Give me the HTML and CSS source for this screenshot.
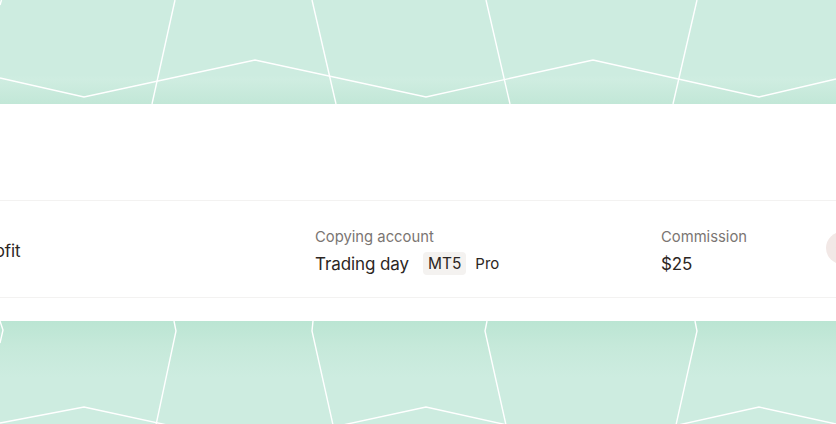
FILE: index.html
```html
<!DOCTYPE html>
<html>
<head>
<meta charset="utf-8">
<link rel="stylesheet" href="styles.css">
</head>
<body>
<div class="page">
  <div class="band band-top">
    <svg class="pattern" width="836" height="104" viewBox="0 0 836 104">
      <g fill="none" stroke="#ffffff" stroke-width="1.4" stroke-linejoin="miter">
        <polyline points="1.5,0 0,5"/>
        <polyline points="175,0 152,104"/>
        <polyline points="312,0 336,104"/>
        <polyline points="486,0 510,104"/>
        <polyline points="697,0 673,104"/>
        <polyline points="0,78 84,97 255,60 426,97 593,60 759,97 836,79"/>
      </g>
    </svg>
  </div>
  <div class="panel">
    <div class="row">
      <div class="cell cell-profit">
        <span class="value">Profit</span>
      </div>
      <div class="cell">
        <span class="label">Copying account</span>
        <div class="value-line">
          <span class="value">Trading day</span>
          <span class="badge">MT5</span>
          <span class="tag">Pro</span>
        </div>
      </div>
      <div class="cell">
        <span class="label">Commission</span>
        <span class="value">$25</span>
      </div>
      <div class="cell cell-avatar">
        <span class="avatar">C</span>
      </div>
    </div>
  </div>
  <div class="band band-bottom">
    <svg class="pattern" width="836" height="103" viewBox="0 0 836 103">
      <g fill="none" stroke="#ffffff" stroke-width="1.4" stroke-linejoin="miter">
        <polyline points="0,0 3,9 0,22"/>
        <polyline points="174,0 176,10 156,104"/>
        <polyline points="313,0 312,10 333,104"/>
        <polyline points="487,0 485,10 506,104"/>
        <polyline points="695,0 697,10 676,104"/>
        <polyline points="0,102 84,86 255,123 426,86 593,123 759,86 836,103"/>
      </g>
    </svg>
  </div>
</div>
</body>
</html>
```

FILE: styles.css
```css
* {
  box-sizing: border-box;
}

html, body {
  margin: 0;
  padding: 0;
}

body {
  width: 836px;
  height: 424px;
  overflow: hidden;
  background: #cdece0;
  font-family: Inter, "Noto Sans", sans-serif;
  color: #2c2623;
}

.page {
  display: flex;
  flex-direction: column;
  width: 836px;
}

.band {
  display: block;
  overflow: hidden;
}

.band-top {
  height: 104px;
  background: linear-gradient(to bottom, #cdece0 0%, #cdece0 72%, #cfede1 76%, #c2e7d7 100%);
}

.band-bottom {
  height: 103px;
  background: linear-gradient(to bottom, #bbe5d3 0%, #c6e9da 25%, #cdece0 55%, #cdece0 100%);
}

.pattern {
  display: block;
}

.panel {
  height: 217px;
  background: #ffffff;
  padding-top: 96px;
  overflow: hidden;
}

.row {
  display: grid;
  grid-template-columns: 337px 346px 165px 40px;
  height: 98px;
  margin-left: -22px;
  border-top: 1px solid #f3f2f1;
  border-bottom: 1px solid #f3f2f1;
}

.cell {
  display: flex;
  flex-direction: column;
  justify-content: center;
  gap: 6px;
  padding-top: 5px;
}

.cell-profit {
  padding-top: 3px;
}

.label {
  font-size: 14.8px;
  line-height: 18px;
  color: #7a7572;
}

.value {
  font-size: 17px;
  line-height: 24px;
  color: #2c2623;
  letter-spacing: -0.1px;
}

.value-line {
  display: flex;
  align-items: center;
}

.badge {
  margin-left: 14px;
  height: 23px;
  padding: 0 5px;
  border-radius: 4px;
  background: #f4f2f0;
  font-size: 15.5px;
  line-height: 23px;
  color: #2c2623;
}

.tag {
  margin-left: 9px;
  font-size: 15px;
  line-height: 23px;
  color: #2c2623;
}

.cell-avatar {
  padding-top: 0;
  padding-bottom: 2px;
}

.avatar {
  display: flex;
  align-items: center;
  justify-content: center;
  width: 32px;
  height: 32px;
  border-radius: 50%;
  background: #f2e8e6;
  color: #9b6e5c;
  font-size: 17px;
  font-weight: 600;
}
```
